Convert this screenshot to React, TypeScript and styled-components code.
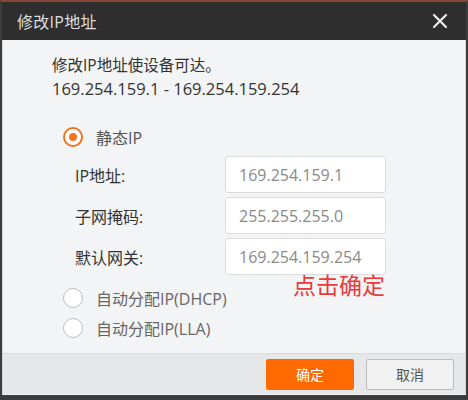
import styled, { createGlobalStyle } from "styled-components";

const GlobalStyle = createGlobalStyle`
  html, body {
    margin: 0;
    padding: 0;
    background: #3a3a3a;
  }
  body {
    font-family: "Open Sans", "Noto Sans CJK SC", sans-serif;
  }
`;

const Window = styled.div`
  width: 468px;
  height: 400px;
  box-sizing: border-box;
  display: flex;
  flex-direction: column;
  background: #3a3a3a;
  border-top: 2px solid #8a4636;
  border-left: 2px solid #3c3c3c;
  border-right: 2px solid #3c3c3c;
  border-bottom: 5px solid #3c3c3c;
`;

const TitleBar = styled.div`
  height: 38px;
  flex-shrink: 0;
  display: flex;
  align-items: center;
  justify-content: space-between;
  padding: 0 18px 0 15px;
  background: #2e2e2e;
`;

const Title = styled.span`
  color: #dedede;
  font-size: 16px;
  letter-spacing: 0.3px;
`;

const CloseButton = styled.button`
  border: none;
  background: none;
  padding: 0;
  width: 16px;
  height: 16px;
  display: flex;
  cursor: pointer;
`;

const Panel = styled.div`
  flex: 1;
  display: flex;
  flex-direction: column;
  border: 1px solid #d6d6d6;
  border-top: none;
  border-bottom: 1px solid #f4f4f4;
`;

const Body = styled.div`
  flex: 1;
  background: #f3f4f5;
  padding: 13px 0 0 49px;
  display: flex;
  flex-direction: column;
`;

const Intro = styled.p<{ $latin?: boolean }>`
  margin: 0;
  font-size: ${(p) => (p.$latin ? "16.5px" : "15.5px")};
  line-height: 24px;
  color: #333;
`;

const Options = styled.div`
  margin-top: 21px;
  padding-left: 11px;
  display: flex;
  flex-direction: column;
`;

const RadioRow = styled.label<{ $checked?: boolean }>`
  display: flex;
  align-items: center;
  gap: 13px;
  height: 30px;
  font-size: 16px;
  color: ${(p) => (p.$checked ? "#555" : "#666")};
`;

const RadioCircle = styled.span<{ $checked?: boolean }>`
  width: 20px;
  height: 20px;
  box-sizing: border-box;
  border-radius: 50%;
  border: ${(p) => (p.$checked ? "2px solid #f27321" : "1.5px solid #bdbdbd")};
  background: #fff;
  display: flex;
  align-items: center;
  justify-content: center;
  &::after {
    content: "";
    display: ${(p) => (p.$checked ? "block" : "none")};
    width: 8px;
    height: 8px;
    border-radius: 50%;
    background: #f27321;
  }
`;

const Fields = styled.div`
  padding: 4px 0 0 12px;
  display: grid;
  grid-template-columns: 150px 161px;
  row-gap: 4px;
  align-items: center;
`;

const FieldLabel = styled.span`
  font-size: 16px;
  color: #333;
`;

const Input = styled.input`
  width: 161px;
  height: 37px;
  box-sizing: border-box;
  border: 1px solid #dcdcdc;
  border-radius: 3px;
  background: #fff;
  padding: 0 0 0 13px;
  font-family: inherit;
  font-size: 16px;
  color: #8a8a8a;
  outline: none;
`;

const Hint = styled.div`
  display: flex;
  justify-content: flex-end;
  padding-right: 80px;
  height: 26px;
  margin-top: -3px;
  margin-bottom: -15px;
  font-size: 23px;
  line-height: 26px;
  color: #ea3a3c;
  position: relative;
`;

const Footer = styled.div`
  height: 40px;
  flex-shrink: 0;
  display: flex;
  align-items: center;
  justify-content: flex-end;
  gap: 12px;
  padding-right: 11px;
  background: #e6e7e8;
  border-top: 1px solid #dadada;
`;

const Button = styled.button<{ $primary?: boolean }>`
  width: 88px;
  height: 31px;
  box-sizing: border-box;
  border-radius: 2px;
  font-family: inherit;
  font-size: 14px;
  cursor: pointer;
  border: 1px solid ${(p) => (p.$primary ? "#ff6a00" : "#bcbcbc")};
  background: ${(p) => (p.$primary ? "#ff6a00" : "#f1f1f1")};
  color: ${(p) => (p.$primary ? "#fff" : "#555")};
`;

export default function App() {
  return (
    <>
      <GlobalStyle />
      <Window>
        <TitleBar>
          <Title>修改IP地址</Title>
          <CloseButton>
            <svg width="16" height="16" viewBox="0 0 16 16">
              <path d="M2 2 L14 14 M14 2 L2 14" stroke="#eee" strokeWidth="2.2" strokeLinecap="round" />
            </svg>
          </CloseButton>
        </TitleBar>
        <Panel>
          <Body>
            <Intro>修改IP地址使设备可达。</Intro>
            <Intro $latin>169.254.159.1 - 169.254.159.254</Intro>
            <Options>
              <RadioRow $checked>
                <RadioCircle $checked />
                静态IP
              </RadioRow>
              <Fields>
                <FieldLabel>IP地址:</FieldLabel>
                <Input defaultValue="169.254.159.1" />
                <FieldLabel>子网掩码:</FieldLabel>
                <Input defaultValue="255.255.255.0" />
                <FieldLabel>默认网关:</FieldLabel>
                <Input defaultValue="169.254.159.254" />
              </Fields>
              <Hint>点击确定</Hint>
              <RadioRow>
                <RadioCircle />
                自动分配IP(DHCP)
              </RadioRow>
              <RadioRow>
                <RadioCircle />
                自动分配IP(LLA)
              </RadioRow>
            </Options>
          </Body>
          <Footer>
            <Button $primary>确定</Button>
            <Button>取消</Button>
          </Footer>
        </Panel>
      </Window>
    </>
  );
}
